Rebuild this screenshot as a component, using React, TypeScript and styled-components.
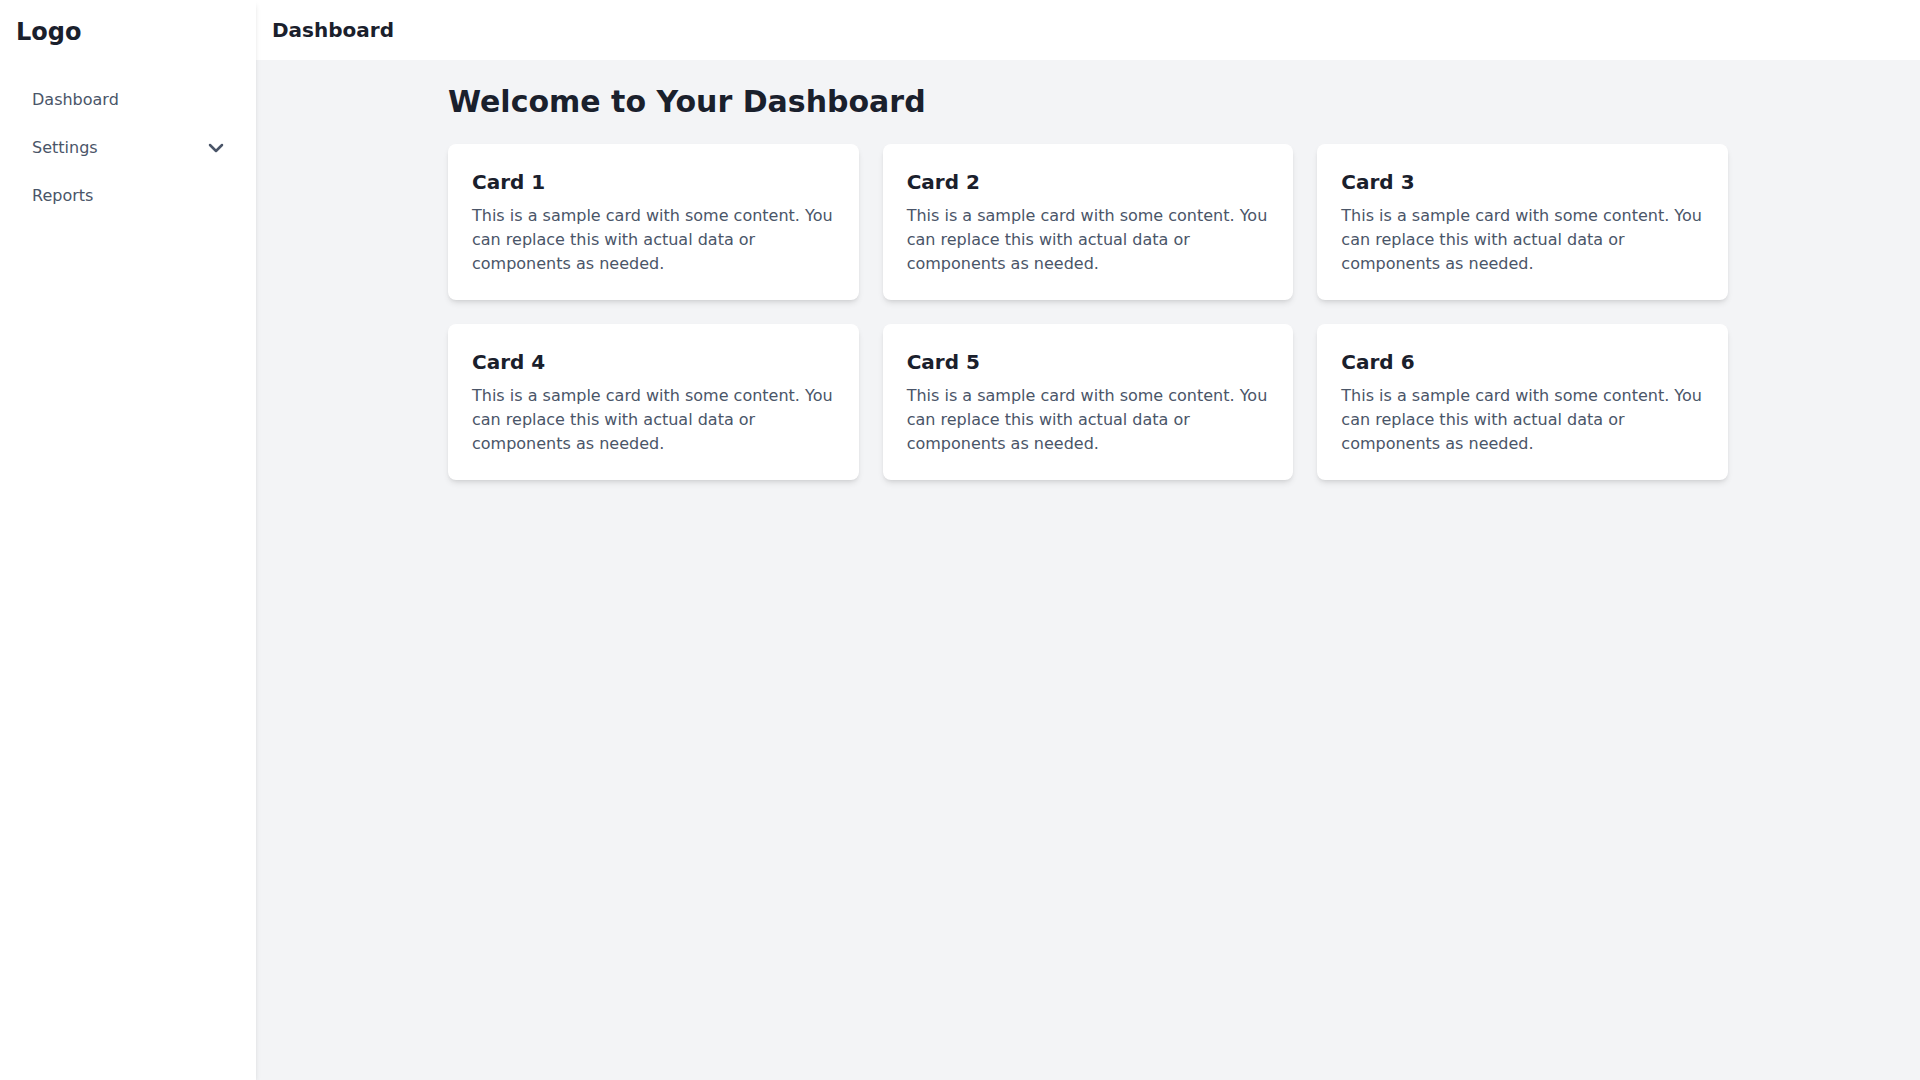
import React from "react";
import styled, { createGlobalStyle } from "styled-components";
import { ChevronDown } from "lucide-react";

const GlobalStyle = createGlobalStyle`
  * { box-sizing: border-box; }
  html, body { margin: 0; padding: 0; height: 100%; }
  body {
    font-family: "DejaVu Sans", sans-serif;
    background: #f3f4f6;
    color: #1f2937;
  }
  #root { height: 100%; }
`;

const Layout = styled.div`
  display: flex;
  height: 100vh;
  overflow: hidden;
`;

const Sidebar = styled.aside`
  position: relative;
  z-index: 2;
  width: 256px;
  flex-shrink: 0;
  background: #ffffff;
  box-shadow: 0 4px 6px -1px rgba(0, 0, 0, 0.1), 0 2px 4px -2px rgba(0, 0, 0, 0.1);
  display: flex;
  flex-direction: column;
`;

const LogoBar = styled.div`
  height: 64px;
  padding: 16px;
  font-size: 24px;
  line-height: 32px;
  font-weight: 700;
  color: #1a202c;
`;

const Nav = styled.nav`
  display: flex;
  flex-direction: column;
  gap: 8px;
  padding: 16px;
`;

const NavItem = styled.a`
  display: flex;
  align-items: center;
  justify-content: space-between;
  height: 40px;
  padding: 8px 16px;
  border-radius: 6px;
  font-size: 16px;
  line-height: 24px;
  color: #4a5568;
  text-decoration: none;
  cursor: pointer;
`;

const Chevron = styled.span`
  display: flex;
  margin-right: -4px;
  color: #4a5568;
`;

const Column = styled.div`
  flex: 1;
  display: flex;
  flex-direction: column;
  min-width: 0;
`;

const Header = styled.header`
  height: 60px;
  padding: 16px;
  background: #ffffff;
  box-shadow: 0 1px 2px 0 rgba(0, 0, 0, 0.03);
  font-size: 20px;
  line-height: 28px;
  font-weight: 700;
  color: #1a202c;
`;

const Main = styled.main`
  flex: 1;
  padding: 24px;
  background: #f3f4f6;
  overflow: auto;
`;

const Container = styled.div`
  max-width: 1280px;
  margin: 0 auto;
`;

const Title = styled.h1`
  margin: 0 0 24px;
  font-size: 30px;
  line-height: 36px;
  font-weight: 700;
  color: #1a202c;
`;

const Grid = styled.div`
  display: grid;
  grid-template-columns: repeat(3, 1fr);
  gap: 24px;
`;

const Card = styled.div`
  background: #ffffff;
  border-radius: 8px;
  padding: 24px;
  box-shadow: 0 4px 6px -1px rgba(0, 0, 0, 0.1), 0 2px 4px -2px rgba(0, 0, 0, 0.1);
`;

const CardTitle = styled.h2`
  margin: 0 0 8px;
  font-size: 20px;
  line-height: 28px;
  font-weight: 700;
  color: #1a202c;
`;

const CardText = styled.p`
  margin: 0;
  font-size: 16px;
  line-height: 24px;
  color: #4a5568;
`;

const cards = [1, 2, 3, 4, 5, 6];

export default function App() {
  return (
    <>
      <GlobalStyle />
      <Layout>
        <Sidebar>
          <LogoBar>Logo</LogoBar>
          <Nav>
            <NavItem>Dashboard</NavItem>
            <NavItem>
              <span>Settings</span>
              <Chevron>
                <ChevronDown size={24} strokeWidth={2.5} />
              </Chevron>
            </NavItem>
            <NavItem>Reports</NavItem>
          </Nav>
        </Sidebar>
        <Column>
          <Header>Dashboard</Header>
          <Main>
            <Container>
              <Title>Welcome to Your Dashboard</Title>
              <Grid>
                {cards.map((n) => (
                  <Card key={n}>
                    <CardTitle>Card {n}</CardTitle>
                    <CardText>
                      This is a sample card with some content. You can replace this with actual data or
                      components as needed.
                    </CardText>
                  </Card>
                ))}
              </Grid>
            </Container>
          </Main>
        </Column>
      </Layout>
    </>
  );
}
